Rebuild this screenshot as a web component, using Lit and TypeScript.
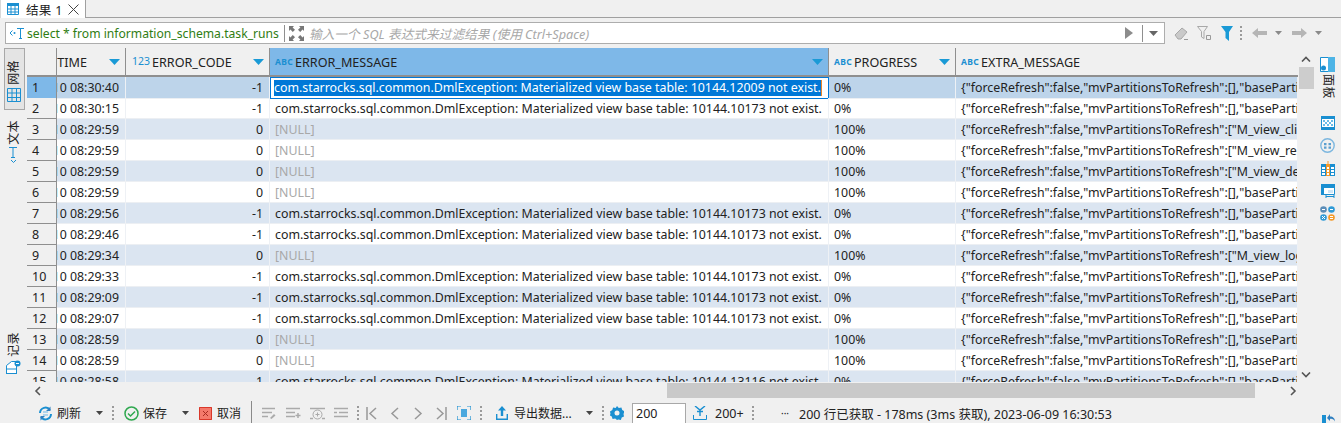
import { LitElement, html, css, svg } from "lit";
import { customElement } from "lit/decorators.js";

const B = "#1a8fd1";
const ic = (w: number, h: number, body: unknown) =>
  html`<svg class="ic" width=${w} height=${h} viewBox="0 0 ${w} ${h}">${body}</svg>`;
const sp = (n: number) => html`<i class="sp" style="width:${n}px"></i>`;
const drop = (c = "#444") => ic(7, 4, svg`<path d="M0 0h7L3.5 4z" fill=${c}/>`);
const dots = html`<span class="dots"></span>`;

const MSG = (id: string) => `com.starrocks.sql.common.DmlException: Materialized view base table: 10144.${id} not exist.`;
const EX = (p: string) => `{"forceRefresh":false,"mvPartitionsToRefresh":[${p}`;
const BP = `],"basePartitions":{}}`;
const rows: [string, string, string | null, string, string][] = [
  ["08:30:40", "-1", "12009", "0%", EX("") + BP],
  ["08:30:15", "-1", "10173", "0%", EX("") + BP],
  ["08:29:59", "0", null, "100%", EX('"M_view_click"]')],
  ["08:29:59", "0", null, "100%", EX('"M_view_register"]')],
  ["08:29:59", "0", null, "100%", EX('"M_view_device"]')],
  ["08:29:59", "0", null, "100%", EX("") + BP],
  ["08:29:56", "-1", "10173", "0%", EX("") + BP],
  ["08:29:46", "-1", "10173", "0%", EX("") + BP],
  ["08:29:34", "0", null, "100%", EX('"M_view_login"]')],
  ["08:29:33", "-1", "10173", "0%", EX("") + BP],
  ["08:29:09", "-1", "10173", "0%", EX("") + BP],
  ["08:29:07", "-1", "10173", "0%", EX("") + BP],
  ["08:28:59", "0", null, "100%", EX("") + BP],
  ["08:28:59", "0", null, "100%", EX("") + BP],
  ["08:28:58", "-1", "13116", "0%", EX("") + BP],
];

const abc = html`<span class="abc">ABC</span>`;
const sortArrow = ic(11, 6, svg`<path d="M0 0h11L5.5 6z" fill="#1a9ad6"/>`);
const gridIcon = ic(14, 14, svg`<path d="M.5.5h13v13H.5zM.5 5h13M.5 9.5h13M5 .5v13M9.500.5v13" fill="none" stroke=${B}/>`);

@customElement("app-root")
export class AppRoot extends LitElement {
  static styles = css`
    :host { display: block; width: 1341px; height: 423px; overflow: hidden; background: #f0f0f0; font-family: "Noto Sans", "Noto Sans CJK SC", sans-serif; font-size: 12.37px; color: #222; }
    .ic { display: block; flex: none; }
    .sp { display: block; flex: none; }
    .dots { display: block; flex: none; width: 2px; height: 15px; background: repeating-linear-gradient(#9a9a9a 0 2px, transparent 2px 4px); }
    .tabs { display: flex; height: 18px; box-sizing: border-box; border-bottom: 1px solid #a0a0a0; }
    .tab { display: flex; align-items: center; width: 86px; height: 18px; box-sizing: border-box; padding-left: 6px; background: #fff; border-right: 1px solid #a0a0a0; border-left: 1px solid #d8d8d8; font-size: 12.5px; }
    .tab .t { margin-left: 7px; width: 42px; letter-spacing: .3px; white-space: nowrap; }
    .filter { display: flex; align-items: center; height: 30px; box-sizing: border-box; padding: 4px 0 4px 5px; }
    .fbox { display: flex; align-items: center; width: 1160px; height: 22px; box-sizing: border-box; background: #fff; border: 1px solid #adadad; }
    .sql { color: #2f7d12; white-space: nowrap; font-size: 12.15px; width: 252px; flex: none; }
    .sep { width: 1px; height: 17px; background: #8f8f8f; flex: none; }
    .ph { color: #a8a8a8; font-style: italic; width: 282px; white-space: nowrap; font-size: 12.7px; flex: none; }
    .fill { flex: 1; }
    .main { display: flex; height: 335px; }
    .left { width: 27px; flex: none; display: flex; flex-direction: column; align-items: center; }
    .vtab { width: 21px; box-sizing: border-box; display: flex; flex-direction: column; align-items: center; }
    .vtab.on { height: 62px; background: #e4e4e4; border: 1px solid #a8a8a8; padding-top: 11px; margin-left: 1px; gap: 3px; }
    .vtab.txt { margin-top: 10px; gap: 2px; }
    .vtab.log { margin-top: auto; margin-bottom: 9px; gap: 3px; }
    .vt { writing-mode: vertical-rl; text-orientation: sideways; font-size: 12px; line-height: 14px; letter-spacing: .4px; }
    .left .vt { transform: rotate(180deg); }
    .grid { width: 1271px; flex: none; height: 334px; overflow: hidden; background: #fff; }
    .row { display: grid; grid-template-columns: 30px 69px 144px 559px 127px 342px; height: 21px; }
    .row.head { height: 29px; background: #f0f0f0; font-size: 12.6px; }
    .row.odd { background: #dbe5f1; }
    .row.sel { background: #bdd4ea; }
    .c { box-sizing: border-box; border-right: 1px solid #eef1f5; border-bottom: 1px solid #eceff3; white-space: nowrap; overflow: hidden; line-height: 21px; padding: 0 5px; min-width: 0; }
    .rh { background: #f0f0f0; border-right: 1px solid #8f8f8f; border-bottom: 1px solid #8f8f8f; padding-left: 5px; font-size: 12.5px; }
    .rh.sel { background: #7eb8e8; }
    .h { box-sizing: border-box; display: flex; align-items: center; padding-top: 1px; border-right: 1px solid #8f8f8f; border-bottom: 2px solid #8f8f8f; white-space: nowrap; overflow: hidden; }
    .h.sel { background: #7eb8e8; }
    .h .n { flex: 1; min-width: 0; }
    .h.e { border-right: none; background: #f0f0f0; }
    .time { padding: 0 6px 0 1px; display: flex; justify-content: flex-end; }
    .num { text-align: right; padding-right: 6px; }
    .null { color: #a8a8a8; }
    .msg { padding-left: 5px; }
    .focus { height: 22px; border: 1px solid #0078d7; background: #fff; padding: 2px 0 0 3px; line-height: 16px; }
    .focus span { display: inline-block; background: #0078d7; color: #fff; height: 16px; line-height: 16px; border-right: 1px solid #e8862a; }
    .abc { color: #1a8fd1; font-size: 8.5px; font-weight: 700; letter-spacing: .3px; width: 25px; padding-left: 5px; box-sizing: border-box; flex: none; margin-top: -2px; }
    .n123 { color: #1a8fd1; font-size: 10.5px; width: 26px; padding-left: 6px; box-sizing: border-box; margin-top: -3px; flex: none; }
    .clip { width: 30px; flex: none; display: flex; justify-content: flex-end; overflow: hidden; }
    .arr { margin: 0 5px 0 0; flex: none; }
    .vbar { width: 16px; flex: none; display: flex; flex-direction: column; align-items: center; background: #f0f0f0; }
    .vbar .ar { height: 14px; display: flex; align-items: center; margin-top: 3px; }
    .vbar .ar.top { margin-top: 4px; }
    .vthumb { width: 15px; height: 22px; background: #cdcdcd; margin-top: 1px; }
    .vbar .ar.bot { margin: 0 0 1px; }
    .right { flex: 1; display: flex; flex-direction: column; align-items: center; padding-top: 9px; }
    .right .vt { margin: 2px 0 17px; color: #222; }
    .ricons { display: flex; flex-direction: column; gap: 8px; align-items: center; }
    .hbar { display: flex; height: 15px; align-items: center; margin-left: 27px; width: 1271px; }
    .hbar .lft { width: 640px; flex: none; display: flex; align-items: center; padding-left: 7px; box-sizing: border-box; }
    .hthumb { width: 588px; height: 15px; background: #c9c9c9; flex: none; }
    .tb { display: flex; align-items: center; height: 30px; white-space: nowrap; font-size: 12.5px; }
    .lab { flex: none; font-size: 12px; width: 24px; }
    .lab.w { width: 58px; }
    .more { width: 18px; flex: none; font-size: 10px; }
    .num200 { width: 29px; flex: none; }
    .input { width: 54px; height: 20px; box-sizing: border-box; border: 1px solid #a8a8a8; border-bottom: none; background: #fff; padding-left: 3px; line-height: 19px; flex: none; }
    .bar { width: 1px; height: 22px; background: #8a8a8a; flex: none; margin-bottom: 2px; }
    .corner { margin-top: 10px; }
  `;

  render() {
    return html`
      <div class="tabs">
        <div class="tab">
          ${ic(12, 12, svg`<path d="M.5.5h11v11H.5z" fill="none" stroke=${B}/><path d="M0 0h12v3H0z" fill=${B}/><path d="M.5 6h11M.5 9h11M4 3v9M8 3v9" stroke=${B} fill="none"/>`)}
          <span class="t">结果 1</span>
          ${ic(11, 11, svg`<path d="M.5.5l10 10M10.500.5l-10 10" stroke="#444" fill="none"/>`)}
        </div>
      </div>

      <div class="filter">
        <div class="fbox">
          ${sp(3)}
          ${ic(16, 12, svg`<path d="M3.500 3.500L1 6l2.500 2.500" stroke=${B} fill="none"/><circle cx="5.500" cy="6" r="1" fill=${B}/><path d="M8 1.500h7M11.500 1.500v10M10 11.500h3" stroke=${B} fill="none"/>`)}
          ${sp(2)}
          <span class="sql">select * from information_schema.task_runs</span>
          ${sp(5)}<span class="sep"></span>${sp(4)}
          ${ic(15, 15, svg`<path d="M0 0h5L3.600 1.400 6 3.800 3.800 6 1.400 3.600 0 5zM15 0v5l-1.400-1.400L11.200 6 9 3.800l2.400-2.400L10 0zM0 15v-5l1.400 1.400L3.800 9 6 11.200l-2.400 2.400L5 15zM15 15h-5l1.400-1.400L9 11.200 11.200 9l2.400 2.400L15 10z" fill="#777"/>`)}
          ${sp(5)}
          <span class="ph">输入一个 SQL 表达式来过滤结果 (使用 Ctrl+Space)</span>
          <span class="fill"></span>
          ${ic(8, 12, svg`<path d="M0 0l8 6-8 6z" fill="#8c8c8c"/>`)}
          ${sp(9)}<span class="sep"></span>${sp(6)}
          ${ic(9, 5, svg`<path d="M0 0h9L4.500 5z" fill="#666"/>`)}
          ${sp(6)}
        </div>
        ${sp(9)}
        ${ic(14, 13, svg`<path d="M1 8l7-7 5 4-6 7H4z" fill="#c9c9c9" stroke="#a8a8a8"/><path d="M10 12.500h4" stroke="#999"/>`)}
        ${sp(9)}
        ${ic(14, 14, svg`<path d="M.5.500h10L7 5.500v7L4.500 11V5.500z" fill="none" stroke="#a8a8a8"/><path d="M9.500 9.500h4v4h-4z" fill="none" stroke="#999"/>`)}
        ${sp(10)}
        ${ic(12, 15, svg`<path d="M0 0h12L8 6v9L4.500 12V6z" fill="#1a9ad6"/>`)}
        ${sp(7)}${dots}${sp(10)}
        ${ic(15, 10, svg`<path d="M6 0v3h9v4H6v3L0 5z" fill="#b5b5b5"/>`)}
        ${sp(8)}${drop("#8a8a8a")}${sp(10)}
        ${ic(15, 10, svg`<path d="M9 0v3H0v4h9v3l6-5z" fill="#b5b5b5"/>`)}
        ${sp(8)}${drop("#8a8a8a")}
      </div>

      <div class="main">
        <div class="left">
          <div class="vtab on"><span class="vt">网格</span>${gridIcon}</div>
          <div class="vtab txt"><span class="vt">文本</span>
            ${ic(11, 16, svg`<path d="M1 .5h8M5 .5v10M3 10.500h4" stroke=${B} fill="none"/><path d="M3 13l2.500 2.500L8 13" stroke=${B} fill="none"/>`)}
          </div>
          <div class="vtab log"><span class="vt">记录</span>
            ${ic(15, 14, svg`<path d="M.5 5.500l5-4h5v12H.5z" fill="#fff" stroke=${B}/><path d="M.5 9h10v5H.5z" fill="none" stroke=${B}/><circle cx="11.500" cy="3.500" r="3" fill=${B}/><path d="M10 3.500h3" stroke="#fff"/>`)}
          </div>
        </div>

        <div class="grid">
          <div class="row head">
            <div class="h"></div>
            <div class="h"><span class="clip">TIME</span><span class="n"></span><span class="arr">${sortArrow}</span></div>
            <div class="h"><span class="n123">123</span><span class="n">ERROR_CODE</span><span class="arr">${sortArrow}</span></div>
            <div class="h sel">${abc}<span class="n">ERROR_MESSAGE</span><span class="arr">${sortArrow}</span></div>
            <div class="h">${abc}<span class="n">PROGRESS</span><span class="arr">${sortArrow}</span></div>
            <div class="h e">${abc}<span class="n">EXTRA_MESSAGE</span></div>
          </div>
          ${rows.map((r, i) => html`
            <div class="row ${i === 0 ? "sel" : i % 2 === 0 ? "odd" : ""}">
              <div class="c rh ${i === 0 ? "sel" : ""}">${i + 1}</div>
              <div class="c time"><span>2023-06-10&nbsp;${r[0]}</span></div>
              <div class="c num">${r[1]}</div>
              ${i === 0
                ? html`<div class="c focus"><span>${MSG(r[2] as string)}</span></div>`
                : html`<div class="c msg ${r[2] ? "" : "null"}">${r[2] ? MSG(r[2]) : "[NULL]"}</div>`}
              <div class="c">${r[3]}</div>
              <div class="c">${r[4]}</div>
            </div>`)}
        </div>

        <div class="vbar">
          <div class="ar top">${ic(10, 6, svg`<path d="M1 5.500l4-4 4 4" stroke="#555" stroke-width="1.600" fill="none"/>`)}</div>
          <div class="vthumb"></div>
          <span class="fill"></span>
          <div class="ar bot">${ic(10, 6, svg`<path d="M1 .5l4 4 4-4" stroke="#555" stroke-width="1.600" fill="none"/>`)}</div>
        </div>

        <div class="right">
          ${ic(15, 15, svg`<path d="M.5.500h14v14H.5z" fill="#fff" stroke=${B}/><path d="M8 0h7v15H8z" fill="#4db4e6"/><circle cx="3.500" cy="11" r="2.500" fill=${B}/>`)}
          <span class="vt">面板</span>
          <div class="ricons">
            ${ic(14, 14, svg`<path d="M.5.500h13v13H.5z" fill="#fff" stroke=${B}/><path d="M0 0h14v3H0zM0 11h14v3H0z" fill=${B}/><path d="M2 4h2v2H2zM6 4h2v2H6zM10 4h2v2h-2zM4 6h2v2H4zM8 6h2v2H8zM2 8h2v2H2zM6 8h2v2H6zM10 8h2v2h-2z" fill="#6bbce8"/>`)}
            ${ic(15, 15, svg`<circle cx="7.500" cy="7.500" r="6.700" fill="none" stroke="#7db7df" stroke-width="1.400"/><path d="M4 5h2.500v2.200H4zM8.500 5H11v2.200H8.500zM4 8.600h2.500v2.200H4zM8.500 8.600H11v2.200H8.500z" fill="#5a9fd0"/>`)}
            ${ic(14, 15, svg`<path d="M0 3h14v12H0z" fill=${B}/><path d="M1 6h3v2H1zM1 9h3v2H1zM1 12h3v2H1zM10 6h3v2h-3zM10 9h3v2h-3zM10 12h3v2h-3z" fill="#fff"/><path d="M5 3h4v12H5z" fill="#f39a2b"/><path d="M6 6h2v2H6zM6 9h2v2H6zM6 12h2v2H6z" fill="#fff"/><path d="M7 0v3" stroke="#f39a2b"/>`)}
            ${ic(14, 14, svg`<path d="M.5.500h13v10H.5z" fill="#fff" stroke=${B}/><path d="M0 0h14v4H0zM0 4h3v7H0z" fill=${B}/><path d="M5 12.500h8M5 11v3M13 11v3" stroke=${B} fill="none"/><path d="M7 6h5v3H7z" fill="#cfe6f6"/>`)}
            ${ic(15, 15, svg`<circle cx="3.500" cy="3.500" r="3.300" fill="#5b8db8"/><circle cx="11.500" cy="3.500" r="3.300" fill="#2f9ad6"/><circle cx="3.500" cy="11.500" r="3.300" fill="#2f9ad6"/><circle cx="11.500" cy="11.500" r="3.300" fill="#f39a2b"/><path d="M2 3.500h3M10 3.500h3M2 10l3 3M5 10l-3 3M10 10.500h3M10 12.500h3" stroke="#fff"/>`)}
          </div>
        </div>
      </div>

      <div class="hbar">
        <div class="lft">${ic(7, 10, svg`<path d="M6 1L2 5l4 4" stroke="#555" stroke-width="1.600" fill="none"/>`)}</div>
        <div class="hthumb"></div>
        ${sp(35)}
        ${ic(7, 10, svg`<path d="M1 1l4 4-4 4" stroke="#555" stroke-width="1.600" fill="none"/>`)}
      </div>

      <div class="tb">
        ${sp(38)}
        ${ic(15, 15, svg`<path d="M2 7a5.500 5.500 0 0 1 10-3M13 8a5.500 5.500 0 0 1-10 3" fill="none" stroke=${B} stroke-width="2"/><path d="M12.500 .5v4.500H8zM2.500 14.500V10H7z" fill="#2f7fc0"/><path d="M5 6h5M5 9h5" stroke="#6bb7e6"/>`)}
        ${sp(4)}<span class="lab">刷新</span>${sp(15)}${drop()}${sp(9)}${dots}${sp(10)}
        ${ic(15, 15, svg`<circle cx="7.500" cy="7.500" r="6.500" fill="none" stroke="#2fa84f" stroke-width="1.500"/><path d="M4 7.500l2.500 2.500 4.500-4.500" fill="none" stroke="#2fa84f" stroke-width="1.500"/>`)}
        ${sp(4)}<span class="lab">保存</span>${sp(15)}${drop()}${sp(10)}
        ${ic(13, 13, svg`<path d="M0 0h13v13H0z" fill="#f4796b"/><path d="M.5.500h12v12H.5z" fill="none" stroke="#d9382a"/><path d="M4 4l5 5M9 4l-5 5" stroke="#a82a20"/>`)}
        ${sp(5)}<span class="lab">取消</span>${sp(10)}<span class="bar"></span>${sp(10)}
        ${ic(14, 12, svg`<path d="M0 1.500h13M0 5.500h10M0 9.500h6" stroke="#aaa" stroke-width="1.500"/><path d="M8 11l4-4 1.500 1.500-4 3.500z" fill="#aaa"/>`)}
        ${sp(10)}
        ${ic(15, 12, svg`<path d="M0 1.500h14M0 5.500h9M0 9.500h9" stroke="#aaa" stroke-width="1.500"/><path d="M9.500 8.500h5M12 6v5" stroke="#aaa" stroke-width="1.500"/>`)}
        ${sp(9)}
        ${ic(15, 13, svg`<path d="M0 1.500h15M0 11.500h3M12 11.500h3" stroke="#aaa" stroke-width="1.500"/><circle cx="7.500" cy="7.500" r="4.500" fill="none" stroke="#aaa"/><path d="M5.500 7.500h4M7.500 5.500v4" stroke="#aaa"/>`)}
        ${sp(9)}
        ${ic(14, 12, svg`<path d="M0 1.500h14M5 5.500h9M0 9.500h14M0 5.500h3" stroke="#aaa" stroke-width="1.500"/>`)}
        ${sp(9)}${dots}${sp(7)}
        ${ic(11, 13, svg`<path d="M1 0v13" stroke="#999" stroke-width="1.500"/><path d="M10 1L4 6.500 10 12" stroke="#999" stroke-width="1.500" fill="none"/>`)}
        ${sp(13)}
        ${ic(10, 13, svg`<path d="M8 1L2 6.500 8 12" stroke="#999" stroke-width="1.500" fill="none"/>`)}
        ${sp(13)}
        ${ic(10, 13, svg`<path d="M2 1l6 5.500L2 12" stroke="#999" stroke-width="1.500" fill="none"/>`)}
        ${sp(13)}
        ${ic(11, 13, svg`<path d="M10 0v13" stroke="#999" stroke-width="1.500"/><path d="M1 1l6 5.500L1 12" stroke="#999" stroke-width="1.500" fill="none"/>`)}
        ${sp(10)}
        ${ic(14, 14, svg`<path d="M0 4V0h4M10 0h4v4M14 10v4h-4M4 14H0v-4" fill="none" stroke=${B} stroke-width="1.200"/><path d="M4 3h6v8H4z" fill="#4aa8de"/>`)}
        ${sp(9)}${dots}${sp(14)}
        ${ic(12, 14, svg`<path d="M6 0L2 4.500h2.800V10h2.400V4.500H10z" fill=${B}/><path d="M.7 8v5.300h10.600V8" fill="none" stroke=${B} stroke-width="1.400"/>`)}
        ${sp(6)}<span class="lab w">导出数据...</span>${sp(14)}${drop()}${sp(9)}${dots}${sp(6)}
        ${ic(14, 14, svg`<path d="M7 0l1.800 2 2.600-.4.800 2.500 2.300 1.300L13.500 8l.5 2.400-2.300 1-.8 2.500-2.600-.5L7 14l-1.800-1.600-2.600.5-.8-2.500-2.300-1L.5 8l-.5-2.600 2.300-1.300.8-2.500 2.600.4z" fill=${B}/><circle cx="7" cy="7" r="2.500" fill="#f0f0f0"/>`)}
        ${sp(8)}<div class="input">200</div>${sp(7)}
        ${ic(14, 14, svg`<path d="M2 0l5 4 5-4M7 4v6M4 5.500h6" fill="none" stroke=${B} stroke-width="1.400"/><path d="M.5 9v4.500h13V9" fill="none" stroke=${B}/>`)}
        ${sp(8)}<span class="num200">200+</span>${sp(8)}${dots}${sp(27)}
        <span class="more">···</span>
        <span>200 行已获取 - 178ms (3ms 获取), 2023-06-09 16:30:53</span>
        <span class="fill"></span>
        <span class="corner">${ic(13, 10, svg`<path d="M0 2h4v8H0z" fill=${B}/><path d="M5 5l3-4v2.500c3 0 5 2 5 5-1-2-3-3-5-2.500V8z" fill="#2f7fc0"/>`)}</span>
        ${sp(6)}
      </div>
    `;
  }
}
